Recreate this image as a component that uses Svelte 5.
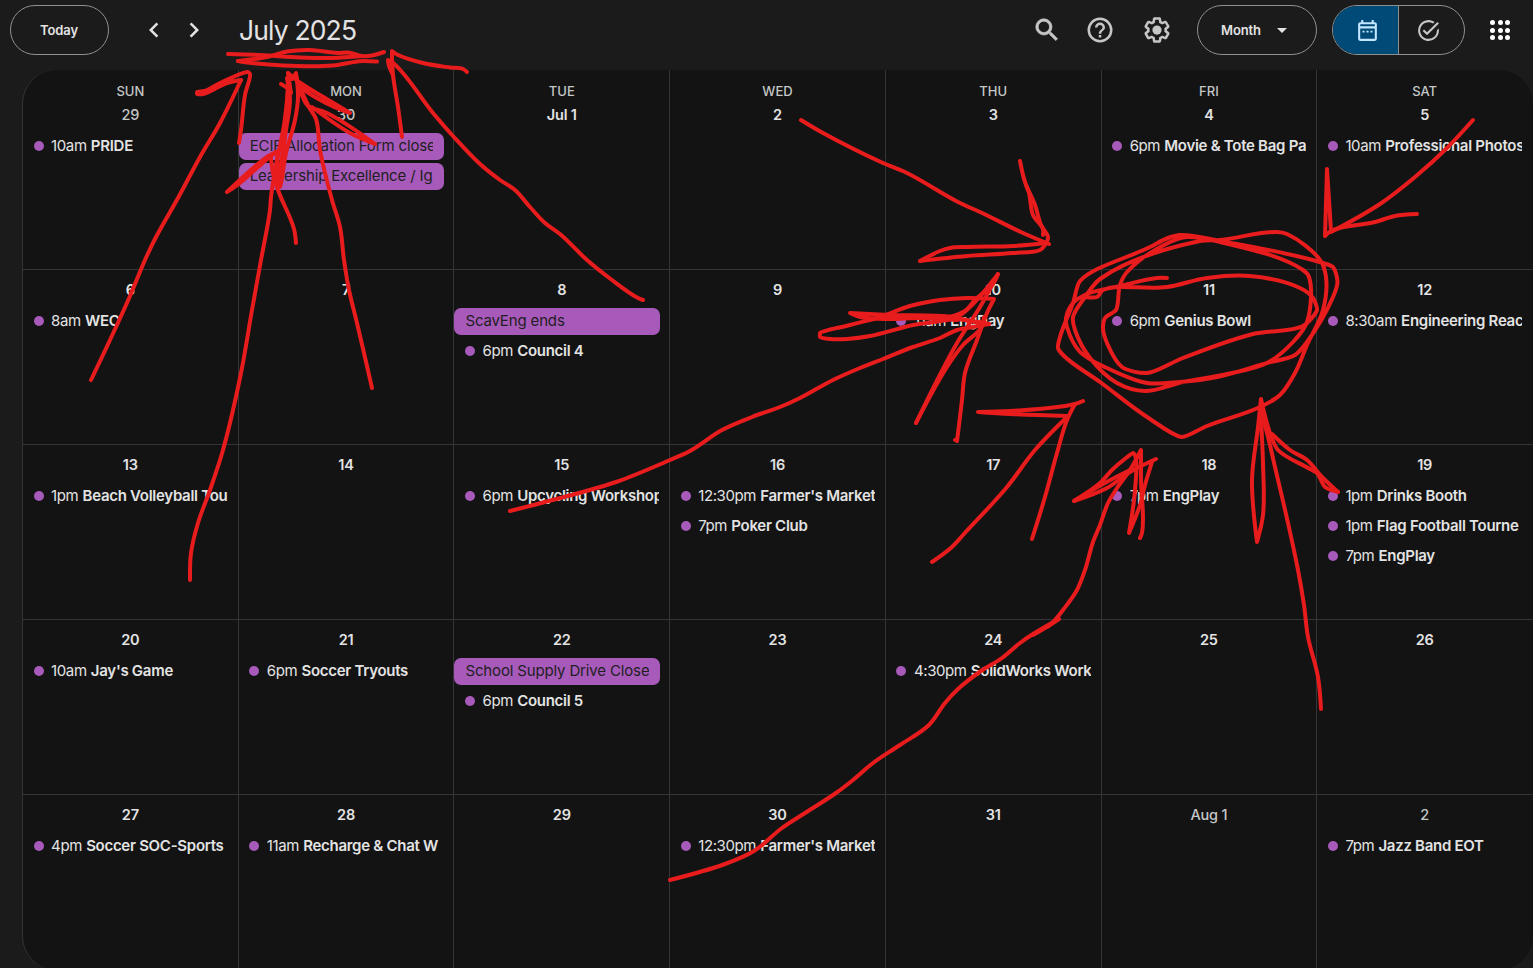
<script>
  const weekdays = ['SUN', 'MON', 'TUE', 'WED', 'THU', 'FRI', 'SAT'];
  const t = (time, title) => ({ time, title });
  const a = (title) => ({ title, allDay: true });
  const d = (label, events = [], dim = false) => ({ label, events, dim });

  const weeks = [
    [
      d('29', [t('10am', 'PRIDE')], true),
      d('30', [a('ECIF Allocation Form closes'), a('Leadership Excellence / Ig')], true),
      d('Jul 1'),
      d('2'),
      d('3'),
      d('4', [t('6pm', 'Movie & Tote Bag Pa')]),
      d('5', [t('10am', 'Professional Photos')])
    ],
    [
      d('6', [t('8am', 'WEC')]),
      d('7'),
      d('8', [a('ScavEng ends'), t('6pm', 'Council 4')]),
      d('9'),
      d('10', [t('11am', 'EngDay')]),
      d('11', [t('6pm', 'Genius Bowl')]),
      d('12', [t('8:30am', 'Engineering Reac')])
    ],
    [
      d('13', [t('1pm', 'Beach Volleyball Tou')]),
      d('14'),
      d('15', [t('6pm', 'Upcycling Workshop')]),
      d('16', [t('12:30pm', "Farmer's Market"), t('7pm', 'Poker Club')]),
      d('17'),
      d('18', [t('7pm', 'EngPlay')]),
      d('19', [t('1pm', 'Drinks Booth'), t('1pm', 'Flag Football Tourne'), t('7pm', 'EngPlay')])
    ],
    [
      d('20', [t('10am', "Jay's Game")]),
      d('21', [t('6pm', 'Soccer Tryouts')]),
      d('22', [a('School Supply Drive Close'), t('6pm', 'Council 5')]),
      d('23'),
      d('24', [t('4:30pm', 'SolidWorks Work')]),
      d('25'),
      d('26')
    ],
    [
      d('27', [t('4pm', 'Soccer SOC-Sports')]),
      d('28', [t('11am', 'Recharge & Chat W')]),
      d('29'),
      d('30', [t('12:30pm', "Farmer's Market")]),
      d('31'),
      d('Aug 1', [], true),
      d('2', [t('7pm', 'Jazz Band EOT')], true)
    ]
  ];

  const strokes = [
    // underline below the month title
    '238,61 267,57 287,51.5 310,50 338,53 348,52.5 362,56 372,55.5 384,52',
    '228,54 260,55 300,57.5 333,58 362,56',
    '238,61 247,62.5 283,65.5 333,65.5 362,61 377,61.5',
    // arrow from the 6th
    '91,380 110,340 130,296 145,260 156,237 178,198 200,157 220,123 241,80',
    '241,80 227,83 203,94 197,94 197,92 205,91 220,83 248,72 250,74 245,95 241,130 239,143',
    // arrow from the 13th
    '190,580 191,553 198,523 210,490 223,450 241,373 252,310 261,260 270,210 271,197 276,165 284,125 288,90 289,78',
    '281,84 287,88 291,93 288,73 292,79 296,73 298,97 295,120 286,153 280,187 277,187 283,150 287,107 288,77',
    '287,78 290,100 286,130 282,160 278,187',
    '288,73 299,82 325,98 350,113 330,105 300,86 296,76',
    '300,90 308,106 327,113 375,144 350,133 312,107',
    // arrow from the 7th
    '302,92 309,107 316,119 320,150 332,200 340,227 344,260 349,290 357,323 372,388',
    '278,151 267,157 227,192 236,186 257,168 271,156 278,151 277,170 278,187',
    '271,158 273,173 278,190 294,229 296,243',
    // arrow from the 8th
    '643,300 638,298 612,280 587,260 560,234 545,223 530,207 515,190 500,180 480,164 453,136 433,113 392,62 388,60 389,66 393,75',
    '467,72 463,69 450,67.5 423,63 397,54.5 392,51 392,57 393,75 398,107 402,137',
    // arrow from the 2nd
    '801,120 823,133 883,163 905,172 960,203 980,212 1023,233 1049,244',
    '1020,161 1025,182 1035,205 1041,225 1048,237 1045,245 1040,250 1013,253 967,256 920,261',
    '920,261 940,251 950,248 967,247 1013,246 1047,243',
    '1026,185 1029,193 1033,215 1043,229 1043,235',
    // arrow from the 15th
    '510,511 545,502 616,482 670,460 690,451 722,430 752,417 780,407 800,398 833,380 860,368 883,359 913,347 940,338 957,330 973,327 989,324 970,321 953,317 890,315 850,313 860,317 890,319 920,318 957,320',
    '989,324 957,319 920,317 880,315',
    '955,440 957,441 959,425 962,400 965,373 977,340 987,313 994,299 967,298 940,300 910,306 880,317 850,325 820,333 820,337 830,339 847,339 870,336 913,325 957,317 970,307 998,274 980,307 957,343 916,423',
    '916,423 947,367 963,345 981,328 984,317',
    '998,274 993,284 975,300 965,311 950,317',
    // arrow towards the 11th from the lower left
    '932,562 952,547 963,535 1007,487 1035,450 1067,417',
    '1067,416 1010,414 978,412 1010,411 1075,404 1083,401',
    '1075,404 1067,420 1057,453 1045,497 1032,539',
    // arrow from the 30th
    '670,880 725,864 754,851 782,828 805,813 836,793 853,780 873,763 900,745 929,725 945,703 958,689 981,671 1002,658 1020,643 1033,634 1059,619 1047,627',
    '1033,635 1052,623 1063,610 1077,590 1085,570 1093,542 1100,525 1108,503 1117,488 1130,470 1141,450 1141,480 1142,533 1140,538',
    '1152,462 1145,485 1140,505 1129,533 1135,490 1135,455 1133,453 1113,469 1100,483 1074,501 1107,488 1130,472 1156,459',
    '1074,501 1103,484 1130,470',
    // arrow from the 25th
    '1321,709 1318,677 1308,637 1304,605 1298,570 1288,523 1275,467 1267,433 1261,413',
    '1261,399 1258,427 1252,480 1257,542 1263,515 1263,463 1261,413 1261,399 1270,433 1278,450 1310,469 1317,473 1325,487 1338,492',
    '1338,492 1322,477 1307,460 1290,450 1272,434',
    // arrow from the 5th
    '1473,120 1446,149 1415,177 1380,204 1331,232',
    '1331,231 1327,169 1325,236 1331,231 1375,222 1395,216 1417,214',
    // rings round the 11th
    '1167,278 1157,278 1120,286 1087,294 1073,303 1066,318 1067,327 1080,352 1107,368 1147,383 1180,382 1217,377 1267,363 1295,355 1307,342 1333,297 1337.5,282 1333,267 1323,263 1220,241 1180,235 1168,238 1150,247 1080,281 1073,303 1060,337 1058,348 1063,355 1100,382 1150,419 1182,437 1207,426 1260,407 1280,395 1295,373 1307,345 1323,310 1326,277 1320,260 1287,234 1277,232 1220,240 1200,241 1100,279 1085,297 1073,317 1075,330 1090,358 1117,383 1145,391 1183,382 1227,374 1267,363 1293,342 1307,322 1309,277 1303,270 1220,242 1187,237 1170,242 1127,272 1120,285 1116,310 1105,318 1103,328 1107,343 1122,367 1147,373 1183,358 1253,334 1303,326 1317,310 1313,298 1300,288 1250,276 1207,278 1167,287 1103,290 1097,297 1085,297'
  ];

  // Turns a list of points into a freehand path: gentle bends are rounded,
  // sharp reversals stay pointed.
  function ink(list) {
    const p = list.split(' ').map((s) => s.split(',').map(Number));
    const sub = (m, n) => [n[0] - m[0], n[1] - m[1]];
    const unit = (v) => {
      const len = Math.hypot(...v) || 1;
      return [v[0] / len, v[1] / len];
    };
    const tangents = p.map((pt, i) => {
      if (i === 0 || i === p.length - 1) return [0, 0];
      const u = unit(sub(p[i - 1], pt));
      const v = unit(sub(pt, p[i + 1]));
      const bend = Math.max(0, u[0] * v[0] + u[1] * v[1]);
      const dir = unit([u[0] + v[0], u[1] + v[1]]);
      return [dir[0] * bend * 0.34, dir[1] * bend * 0.34];
    });
    let path = `M${p[0]}`;
    for (let i = 0; i < p.length - 1; i++) {
      const seg = Math.hypot(...sub(p[i], p[i + 1]));
      const [u, v] = [tangents[i], tangents[i + 1]];
      path += `C${p[i][0] + u[0] * seg},${p[i][1] + u[1] * seg} ${p[i + 1][0] - v[0] * seg},${p[i + 1][1] - v[1] * seg} ${p[i + 1]}`;
    }
    return path;
  }
</script>

<div class="page">
  <header>
    <button class="pill today">Today</button>
    <nav>
      <svg viewBox="0 0 24 24"><path d="M15.41 7.41 14 6l-6 6 6 6 1.41-1.41L10.83 12z" /></svg>
      <svg viewBox="0 0 24 24"><path d="M10 6 8.59 7.41 13.17 12l-4.58 4.59L10 18l6-6z" /></svg>
    </nav>
    <h1>July 2025</h1>
    <div class="tools">
      <svg class="search" viewBox="0 0 24 24"><path d="M15.5 14h-.79l-.28-.27A6.47 6.47 0 0 0 16 9.5 6.5 6.5 0 1 0 9.5 16c1.61 0 3.09-.59 4.23-1.57l.27.28v.79l5 4.99L20.49 19l-4.99-5zm-6 0a4.5 4.5 0 1 1 0-9 4.5 4.5 0 0 1 0 9z" /></svg>
      <svg viewBox="0 0 24 24"><path d="M11 18h2v-2h-2v2zm1-16a10 10 0 1 0 0 20 10 10 0 0 0 0-20zm0 18a8 8 0 1 1 0-16 8 8 0 0 1 0 16zm0-14a4 4 0 0 0-4 4h2a2 2 0 1 1 4 0c0 2-3 1.75-3 5h2c0-2.25 3-2.5 3-5a4 4 0 0 0-4-4z" /></svg>
      <svg viewBox="0 0 24 24"><path d="M13.85 22.25h-3.7c-.74 0-1.36-.54-1.45-1.27l-.27-1.89c-.27-.14-.53-.29-.79-.46l-1.8.72c-.7.26-1.47-.03-1.81-.65L2.2 15.53c-.35-.66-.2-1.44.36-1.88l1.53-1.19c-.01-.15-.02-.3-.02-.46 0-.15.01-.31.02-.46l-1.52-1.19c-.59-.45-.74-1.26-.37-1.88l1.85-3.19c.34-.62 1.11-.9 1.79-.63l1.81.73c.26-.17.52-.32.78-.46l.27-1.91c.09-.7.71-1.25 1.44-1.25h3.7c.74 0 1.36.54 1.45 1.27l.27 1.89c.27.14.53.29.79.46l1.8-.72c.71-.26 1.48.03 1.82.65l1.84 3.18c.36.66.2 1.44-.36 1.88l-1.52 1.19c.01.15.02.3.02.46s-.01.31-.02.46l1.52 1.19c.56.45.72 1.23.37 1.86l-1.86 3.22c-.34.62-1.11.9-1.8.63l-1.8-.72c-.26.17-.52.32-.78.46l-.27 1.91c-.1.68-.72 1.22-1.46 1.22zm-3.23-2h2.76l.37-2.55.53-.22c.44-.18.88-.44 1.34-.78l.45-.34 2.38.96 1.38-2.4-2.03-1.58.07-.56c.03-.26.06-.51.06-.78s-.03-.53-.06-.78l-.07-.56 2.03-1.58-1.39-2.4-2.39.96-.45-.35c-.42-.32-.87-.58-1.33-.77l-.52-.22-.37-2.55h-2.76l-.37 2.55-.53.21c-.44.19-.88.44-1.34.79l-.45.33-2.38-.95-1.39 2.39 2.03 1.58-.07.56a7 7 0 0 0-.06.79c0 .26.02.53.06.78l.07.56-2.03 1.58 1.38 2.4 2.39-.96.45.35c.43.33.86.58 1.33.77l.53.22z" /><circle cx="12" cy="12" r="3.7" /></svg>
    </div>
    <button class="pill month">Month<span class="caret"></span></button>
    <div class="pill switch">
      <div class="on">
        <svg viewBox="0 0 24 24"><path d="M19 4h-1V2h-2v2H8V2H6v2H5a2 2 0 0 0-2 2v14c0 1.1.9 2 2 2h14a2 2 0 0 0 2-2V6a2 2 0 0 0-2-2zm0 16H5V10h14zm0-12H5V6h14zM7.2 12.2h2v1.7h-2zm3.8 0h2v1.7h-2zm3.8 0h2v1.7h-2z" /></svg>
      </div>
      <div>
        <svg viewBox="0 0 24 24"><path d="M22 5.18 10.59 16.6l-4.24-4.24 1.41-1.41 2.83 2.83 10-10zM12 20a8 8 0 1 1 4.43-14.66l1.45-1.45A10 10 0 1 0 22 12c0-.63-.06-1.24-.17-1.83l-1.7 1.7A8 8 0 0 1 12 20z" /></svg>
      </div>
    </div>
    <div class="apps">{#each Array(9) as _}<i></i>{/each}</div>
  </header>

  <main>
    {#each weeks as week, w}
      {#each week as day, i}
        <section class:first={w === 0}>
          {#if w === 0}<div class="weekday">{weekdays[i]}</div>{/if}
          <div class="date" class:dim={day.dim}>{day.label}</div>
          {#each day.events as ev}
            {#if ev.allDay}
              <div class="chip"><span>{ev.title}</span></div>
            {:else}
              <div class="event"><i></i><span>{ev.time} <b>{ev.title}</b></span></div>
            {/if}
          {/each}
        </section>
      {/each}
    {/each}
  </main>

  <svg class="ink" viewBox="0 0 1533 968">
    {#each strokes as s}<path d={ink(s)} />{/each}
  </svg>
</div>

<style>
  :global(body) { margin: 0; background: #1b1b1b; }
  .page {
    position: relative;
    width: 1533px;
    height: 968px;
    overflow: hidden;
    background: #1b1b1b;
    color: #e3e3e3;
    font-family: Inter, "Open Sans", sans-serif;
    font-size: 15px;
  }
  header {
    display: flex;
    align-items: center;
    box-sizing: border-box;
    height: 70px;
    padding: 0 20px 10px 10px;
  }
  .pill {
    box-sizing: border-box;
    height: 50px;
    border: 1px solid #8e918f;
    border-radius: 25px;
    background: transparent;
    color: #e3e3e3;
    font: 600 13px Inter, sans-serif;
    letter-spacing: -0.1px;
    padding: 0;
  }
  .today { width: 99px; padding-right: 1px; }
  nav { display: flex; gap: 10px; margin-left: 30px; }
  svg { display: block; width: 30px; height: 30px; fill: #c4c7c5; }
  nav svg { fill: #e3e3e3; }
  h1 { margin: 0 0 0 30px; font-size: 26.5px; font-weight: 400; letter-spacing: -0.85px; line-height: 32px; white-space: nowrap; }
  .tools { display: flex; margin-left: auto; }
  .tools svg { margin-right: 27px; }
  .tools .search { margin-right: 23px; stroke: #c4c7c5; stroke-width: 0.5; }
  .tools svg:last-child { margin-right: 25px; }
  .month { display: flex; align-items: center; justify-content: center; gap: 16px; width: 120px; padding-right: 6px; }
  .caret { border: 5.5px solid transparent; border-top-color: #e3e3e3; border-bottom: 0; }
  .switch { display: flex; width: 133px; margin: 0 25px 0 15px; overflow: hidden; }
  .switch div { flex: 1; display: flex; align-items: center; justify-content: center; padding-right: 6px; }
  .switch svg { width: 25px; height: 25px; }
  .switch .on { flex: 0 0 65px; padding: 0; background: #004a77; border-right: 1px solid #8e918f; }
  .on svg { fill: #c2e7ff; margin-left: 4px; }
  .apps { display: grid; grid-template-columns: repeat(3, 5px); gap: 2.5px; margin-right: 3px; }
  .apps i { height: 5px; border-radius: 50%; background: #fff; }

  main {
    display: grid;
    grid-template-columns: repeat(7, minmax(0, 1fr));
    grid-template-rows: 200px repeat(4, 175px);
    box-sizing: border-box;
    width: 1511px;
    height: 900px;
    margin-left: 22px;
    border-left: 1px solid #333537;
    border-radius: 34px;
    overflow: hidden;
    background: #131314;
  }
  section {
    box-sizing: border-box;
    padding-top: 10px;
    border-right: 1px solid #333537;
    border-bottom: 1px solid #333537;
    min-width: 0;
  }
  .first { padding-top: 11px; }
  section:nth-child(7n) { border-right-color: transparent; }
  section:nth-child(n + 29) { border-bottom: 0; }
  .weekday { height: 24px; line-height: 21px; text-align: center; font-size: 13px; font-weight: 500; color: #c4c7c5; }
  .date { height: 28px; line-height: 20px; text-align: center; font-size: 14.5px; font-weight: 600; letter-spacing: -0.2px; }
  .dim { color: #c4c7c5; font-weight: 500; }
  .chip, .event { box-sizing: border-box; white-space: nowrap; }
  .chip { height: 27px; line-height: 26px; margin: 0 9px 3px 0; padding: 0 11px; border-radius: 7px; background: #a75aba; color: #1f1f1f; letter-spacing: -0.15px; }
  .chip span { display: block; overflow: hidden; }
  .event { display: flex; align-items: center; height: 26px; line-height: 26px; margin: 0 10px 4px 0; padding-left: 10.6px; overflow: hidden; letter-spacing: -0.4px; }
  .event i { flex: none; width: 10px; height: 10px; border-radius: 50%; background: #a75aba; margin-right: 7.5px; }
  .event b { font-weight: 600; letter-spacing: -0.28px; margin-left: 0.4px; }
  .ink { position: absolute; inset: 0; width: 1533px; height: 968px; pointer-events: none; }
  .ink path { fill: none; stroke: #e81c1c; stroke-width: 4; stroke-linecap: round; stroke-linejoin: round; }
</style>
